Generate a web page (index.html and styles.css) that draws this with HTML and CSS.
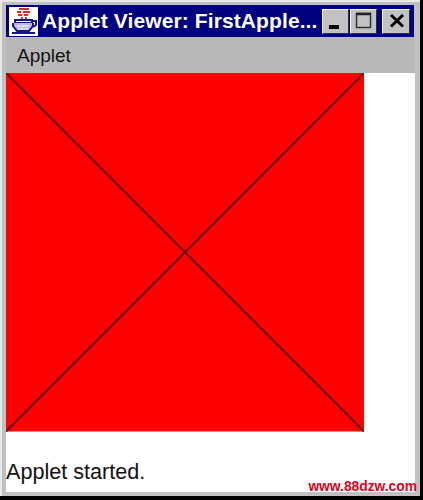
FILE: index.html
```html
<!DOCTYPE html>
<html lang="en">
<head>
    <meta charset="UTF-8">
    <title>Applet Viewer: FirstApplet</title>
    <link rel="stylesheet" href="styles.css">
</head>
<body>
    <div class="ventana">
        <!-- Barra de titulo -->
        <div class="titulo">
            <svg class="icono" width="29" height="29" viewBox="0 0 29 29">
                <rect width="29" height="29" fill="#fff"/>
                <path d="M10 2h10M8 5h4M14 5h7M9 8h4M15 8h4M12 11h2M16 11h2" stroke="#e02828" stroke-width="2" fill="none"/>
                <path d="M6 13h17v3h-17z" stroke="#14148c" stroke-width="2" fill="#fff"/>
                <path d="M4 16v3l4 5h12l4-5v-3" stroke="#14148c" stroke-width="2" fill="#b8b8e0"/>
                <path d="M8 19h12M9 22h10" stroke="#fff" stroke-width="1" fill="none"/>
                <path d="M23 14h4v4l-3 2M3 26h23" stroke="#14148c" stroke-width="2" fill="none"/>
            </svg>
            <span class="titulo-texto">Applet Viewer: FirstApple...</span>
            <div class="botones">
                <div class="boton"><svg width="26" height="24" viewBox="0 0 26 24"><rect x="6" y="15" width="10" height="4" fill="#000"/></svg></div>
                <div class="boton boton-max"><svg width="26" height="24" viewBox="0 0 26 24"><path d="M5.500 3.500h14v14h-14z" stroke="#333" stroke-width="1.500" fill="none"/><path d="M5 4h15" stroke="#222" stroke-width="2.500"/></svg></div>
                <div class="boton boton-cerrar"><svg width="26" height="24" viewBox="0 0 26 24"><path d="M8 5l12 11.500M20 5l-12 11.500" stroke="#000" stroke-width="3" fill="none"/></svg></div>
            </div>
        </div>

        <!-- Menu -->
        <div class="menu">Applet</div>

        <!-- Area del applet -->
        <div class="contenido">
            <svg class="lienzo" width="358" height="359" viewBox="0 0 358 359">
                <rect width="358" height="358.500" fill="#ff0000"/>
                <path d="M0 0L358 358.500M358 0L0 358.500" stroke="#6e0808" stroke-width="2" fill="none"/>
            </svg>
            <div class="estado">Applet started.</div>
            <div class="marca">www.88dzw.com</div>
        </div>
    </div>
</body>
</html>
```

FILE: styles.css
```css
/* Estilo general */
body {
    margin: 0;
    padding: 0;
    background-color: #000;
    font-family: "Liberation Sans", Arial, sans-serif;
    overflow: hidden;
}

/* Ventana principal */
.ventana {
    box-sizing: border-box;
    width: 420px;
    height: 496px;
    padding: 3px 5px 4px 4px;
    background-color: #c0c0c0;
    border-top: 2px solid #e8e8e8;
    border-left: 2px solid #e8e8e8;
    display: flex;
    flex-direction: column;
}

/* Barra de titulo */
.titulo {
    flex: none;
    height: 32px;
    margin-right: 1px;
    background-color: #000080;
    display: flex;
    align-items: center;
    padding: 0 4px 0 3px;
}

.icono {
    flex: none;
}

.titulo-texto {
    margin-left: 4px;
    flex: 1;
    color: #fff;
    font-weight: bold;
    font-size: 21px;
    letter-spacing: 0.1px;
    white-space: nowrap;
}

.botones {
    display: flex;
}

.boton {
    box-sizing: border-box;
    width: 27px;
    height: 25px;
    margin-left: 1px;
    background-color: #c2c2c2;
    border: 1px solid;
    border-color: #f2f2f2 #303030 #303030 #f2f2f2;
    overflow: hidden;
}

.boton svg {
    display: block;
}

.boton-cerrar {
    width: 28px;
    margin-left: 5px;
}

/* Barra de menu */
.menu {
    flex: none;
    height: 36px;
    line-height: 38px;
    padding-left: 11px;
    font-size: 19px;
    color: #111;
    background-color: #b8b8b8;
}

/* Contenido */
.contenido {
    flex: 1;
    background-color: #fff;
    position: relative;
}

.lienzo {
    display: block;
}

.estado {
    margin-top: 27px;
    font-size: 21.6px;
    color: #111;
}

/* Marca de agua encima de la esquina */
.marca {
    position: absolute;
    right: -2px;
    bottom: -2px;
    color: #e00020;
    font-size: 13.800px;
    font-weight: bold;
}
```
